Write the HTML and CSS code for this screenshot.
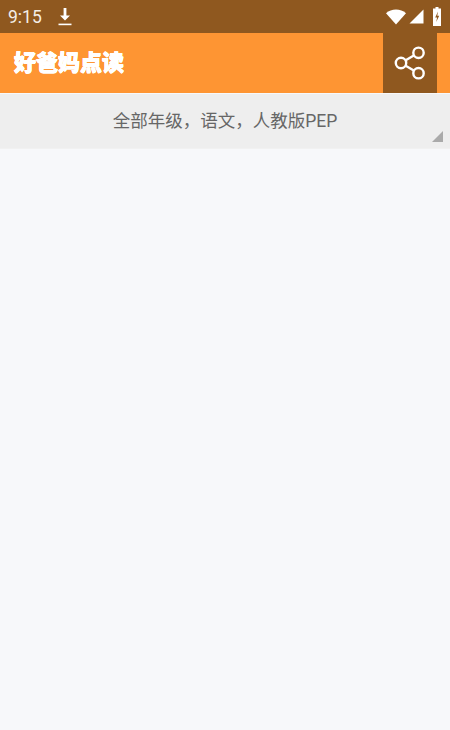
FILE: index.html
```html
<!DOCTYPE html>
<html>
<head>
<meta charset="utf-8">
<title>好爸妈点读</title>
<link rel="stylesheet" href="styles.css">
</head>
<body>
<div class="status-bar">
  <span class="time">9:15</span>
  <svg class="ico-download" width="14" height="20" viewBox="0 0 14 20">
    <path d="M5.6 1h2.8v7.5H12L7 13.6 2 8.5h3.6z" fill="#fff"/>
    <rect x="0.5" y="16.6" width="13" height="1.6" fill="#fff"/>
  </svg>
  <span class="status-right">
    <svg width="20" height="16" viewBox="0 0 20 16"><path d="M0 4.2C2.8 1.8 6.2.6 10 .6s7.2 1.2 10 3.6L10 15.6z" fill="#fff"/></svg>
    <svg width="15" height="15" viewBox="0 0 15 15"><path d="M14.5 .5V14.5H.5z" fill="#fff"/></svg>
    <svg class="ico-battery" width="8" height="19" viewBox="0 0 8 19">
      <path d="M2.5 0h3v1.5H8V19H0V1.5h2.5z" fill="#fff"/>
      <path d="M5 4.5L2.2 10.4h1.9L3.2 15l3-6.2H4.3z" fill="#8f581f"/>
    </svg>
  </span>
</div>
<div class="app-bar">
  <div class="logo">好爸妈点读</div>
  <div class="share-btn">
    <svg width="32" height="34" viewBox="0 0 32 34" fill="none" stroke="#fff" stroke-width="2.4">
      <circle cx="7" cy="17" r="5.2"/>
      <circle cx="24.5" cy="6.8" r="5.2"/>
      <circle cx="24.5" cy="27.2" r="5.2"/>
      <path d="M11.7 14.3L19.8 9.5M11.7 19.7L19.8 24.5"/>
    </svg>
  </div>
</div>
<div class="filter-bar">
  <span>全部年级，语文，人教版PEP</span>
  <i class="corner"></i>
</div>
<div class="content"></div>
</body>
</html>
```

FILE: styles.css
```css
body{margin:0;padding:0;width:450px;height:730px;overflow:hidden;background:#f7f8fa;font-family:"Roboto","Noto Sans CJK SC",sans-serif;}
.status-bar{height:33px;background:#8f581f;color:#fff;display:flex;align-items:center;padding:0 9px 0 8px;box-sizing:border-box;}
.time{font-size:17.5px;color:#f4eee8;}
.ico-download{margin-left:16px;}
.status-right{margin-left:auto;display:flex;align-items:center;gap:3px;}
.ico-battery{margin-left:6px;}
.app-bar{height:60px;background:#fe9533;display:flex;justify-content:space-between;}
.logo{margin:13px 0 0 14px;font-family:"Noto Sans CJK SC",sans-serif;font-weight:900;font-size:22px;line-height:28px;color:#fff;text-shadow:.5px 0 .5px #fff,-.5px 0 .5px #fff,0 .5px .5px #fff,0 -.5px .5px #fff;}
.share-btn{width:54px;margin-right:13px;background:#8f581f;display:flex;align-items:center;justify-content:center;}
.filter-bar{height:55px;margin-top:1px;background:#eeeeee;border-bottom:1px solid #f1f1f1;box-sizing:border-box;position:relative;display:flex;justify-content:center;padding-top:15px;font-size:17.5px;line-height:24px;color:#666;}
.corner{position:absolute;right:7px;bottom:6px;width:0;height:0;border-left:11px solid transparent;border-bottom:11px solid #aaa;}
.content{height:581px;background:#f7f8fa;}
```
